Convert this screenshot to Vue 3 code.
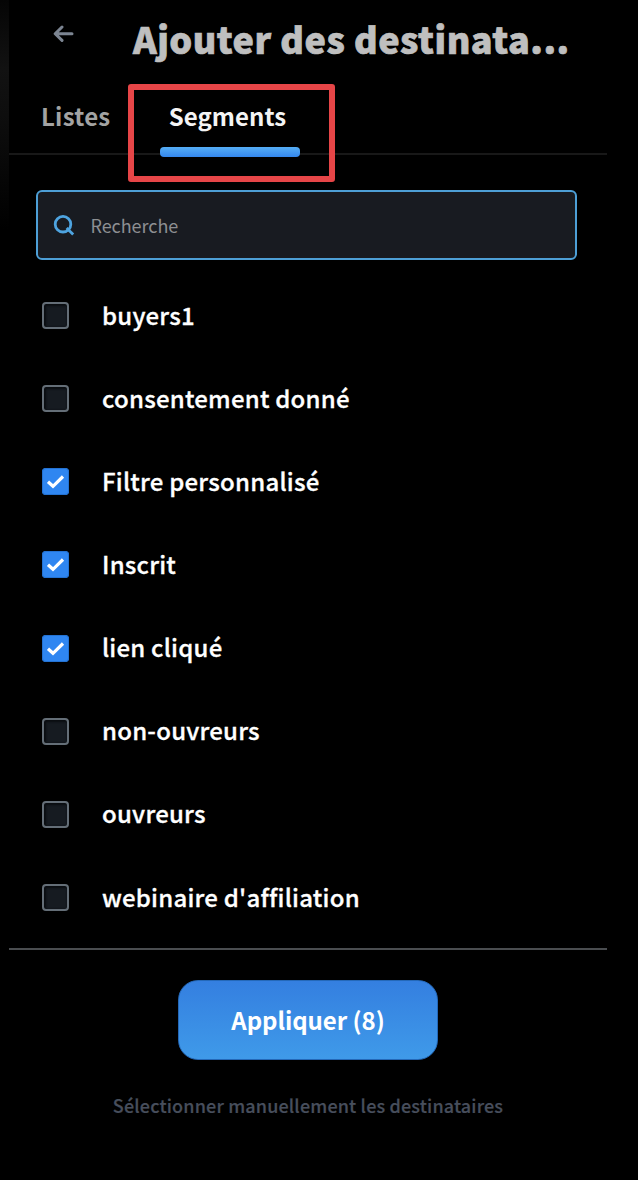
<template>
    <div class="screen">
        <div class="edge"></div>

        <div class="panel">
            <header class="header">
                <button class="back" aria-label="Retour">
                    <svg width="22" height="18" viewBox="0 0 22 18">
                        <path d="M19 8.7H2.7M9 2L2.2 8.7l6.8 6.7" />
                    </svg>
                </button>
                <h1 class="title">Ajouter des destinata...</h1>
            </header>

            <nav class="tabs">
                <button
                    v-for="tab in tabs"
                    :key="tab"
                    class="tab"
                    :class="{ active: tab === activeTab }"
                    @click="activeTab = tab"
                >
                    <span class="tab-label">{{ tab }}</span>
                </button>
                <div class="highlight"></div>
            </nav>

            <label class="search">
                <svg class="search-icon" width="22" height="22" viewBox="0 0 22 22">
                    <circle cx="10" cy="10.2" r="7.8" />
                    <path d="M13.6 14L20.2 20.6" />
                </svg>
                <input v-model="query" type="text" placeholder="Recherche" />
            </label>

            <ul class="segments">
                <li v-for="segment in filteredSegments" :key="segment.name" class="segment" @click="toggle(segment)">
                    <span class="checkbox" :class="{ checked: segment.checked }">
                        <svg v-if="segment.checked" width="27" height="27" viewBox="0 0 27 27">
                            <path d="M6 13.7L11 18.3L21 8.5" />
                        </svg>
                    </span>
                    <span class="segment-name">{{ segment.name }}</span>
                </li>
            </ul>

            <footer class="footer">
                <button class="apply"><span>Appliquer (8)</span></button>
                <a class="manual">Sélectionner manuellement les destinataires</a>
            </footer>
        </div>
    </div>
</template>

<script setup>
import { ref, computed } from 'vue';

const tabs = ['Listes', 'Segments'];
const activeTab = ref('Segments');
const query = ref('');

const segments = ref([
    { name: 'buyers1', checked: false },
    { name: 'consentement donné', checked: false },
    { name: 'Filtre personnalisé', checked: true },
    { name: 'Inscrit', checked: true },
    { name: 'lien cliqué', checked: true },
    { name: 'non-ouvreurs', checked: false },
    { name: 'ouvreurs', checked: false },
    { name: "webinaire d'affiliation", checked: false },
]);

const filteredSegments = computed(() =>
    segments.value.filter((s) => s.name.toLowerCase().includes(query.value.toLowerCase()))
);

const toggle = (segment) => {
    segment.checked = !segment.checked;
};
</script>

<style>
body {
    margin: 0;
    background: #000;
}
</style>

<style scoped>
.screen {
    display: flex;
    width: 638px;
    height: 1180px;
    overflow: hidden;
    background: #000;
    color: #fff;
    font-family: "Noto Sans CJK SC", "Noto Sans", sans-serif;
}

.screen * {
    box-sizing: border-box;
}

button {
    padding: 0;
    border: none;
    background: none;
    color: inherit;
    font-family: inherit;
}

/* sliver of the page behind the panel */
.edge {
    width: 9px;
    height: 230px;
    background: linear-gradient(#050505, #121212 30%, #0e0e0e 50%, #000);
}

.panel {
    width: 598px;
}

.header {
    display: flex;
    height: 80px;
}

.back {
    width: 22px;
    height: 18px;
    margin: 25px 58px 0 44px;
}

.back svg {
    display: block;
    fill: none;
    stroke: #7c8592;
    stroke-width: 3;
    stroke-linecap: round;
    stroke-linejoin: round;
}

.title {
    margin: 0;
    font-size: 36px;
    font-weight: 900;
    line-height: 76px;
    letter-spacing: 0.48px;
    white-space: nowrap;
    color: #bfbfbf;
    -webkit-text-stroke: 0.7px #bfbfbf;
}

.tabs {
    position: relative;
    display: flex;
    height: 75px;
    padding-left: 20px;
    gap: 37px;
    border-bottom: 2px solid #181818;
}

.tab {
    height: 77px;
    padding: 0 12px;
    display: flex;
    flex-direction: column;
    align-items: center;
    font-size: 24px;
    font-weight: 700;
    letter-spacing: 0.25px;
    color: #a3a3a3;
}

.tab-label {
    line-height: 71px;
    white-space: nowrap;
}

.tab.active {
    width: 140px;
    margin-left: 1px;
    letter-spacing: 0.05px;
    color: #f4f4f4;
}

.tab.active .tab-label {
    margin-right: 6px;
}

.tab.active::after {
    content: "";
    width: 140px;
    height: 10px;
    margin-top: -4px;
    border-radius: 4px;
    background: linear-gradient(#56aef5, #3487ee);
}

.highlight {
    position: absolute;
    left: 119px;
    top: 4px;
    width: 207px;
    height: 98px;
    border: 6px solid #e64547;
    border-radius: 3px;
    pointer-events: none;
}

.search {
    display: flex;
    align-items: center;
    width: 541px;
    height: 70px;
    margin: 35px 0 0 27px;
    padding-left: 15px;
    border: 2px solid #4d9fd6;
    border-radius: 6px;
    background: #181b21;
}

.search-icon {
    fill: none;
    stroke: #4ea4e0;
    stroke-width: 2.8;
}

.search input {
    width: 400px;
    margin-left: 15.5px;
    padding: 0;
    border: none;
    outline: none;
    background: transparent;
    font-family: inherit;
    font-size: 18px;
    letter-spacing: -0.05px;
    color: #fff;
}

.search input::placeholder {
    color: #8d8f92;
    opacity: 1;
}

.segments {
    margin: 14px 0 0;
    padding: 0;
    list-style: none;
}

.segment {
    display: flex;
    align-items: center;
    height: 83.15px;
    padding-left: 33px;
}

.checkbox {
    width: 27px;
    height: 27px;
    border: 2px solid #646e77;
    border-radius: 4px;
    background: #161b21;
    box-shadow: inset 1px 1px 2px 1px #0a0d11;
}

.checkbox.checked {
    border: none;
    background: #2f86f1;
    box-shadow: inset 0 0 0 1px #2472d2;
}

.checkbox svg {
    display: block;
    fill: none;
    stroke: #fff;
    stroke-width: 3.2;
}

.segment-name {
    margin: 0 0 2px 33px;
    font-size: 24px;
    font-weight: 500;
    line-height: 36px;
    letter-spacing: 0.22px;
    white-space: nowrap;
    -webkit-text-stroke: 0.3px #fff;
}

.footer {
    display: flex;
    flex-direction: column;
    align-items: center;
    margin-top: 9px;
    border-top: 2px solid #4a4d50;
}

.apply {
    width: 260px;
    height: 80px;
    margin-top: 30px;
    padding-bottom: 2px;
    border: 1px solid #2468b8;
    border-radius: 20px;
    background: linear-gradient(#347fe0, #3f9ae9);
    font-size: 24px;
    font-weight: 700;
    letter-spacing: -0.05px;
}

.manual {
    margin-top: 31px;
    font-size: 18px;
    font-weight: 500;
    line-height: 28px;
    letter-spacing: 0.16px;
    white-space: nowrap;
    color: #474e5c;
    -webkit-text-stroke: 0.2px #474e5c;
}
</style>
